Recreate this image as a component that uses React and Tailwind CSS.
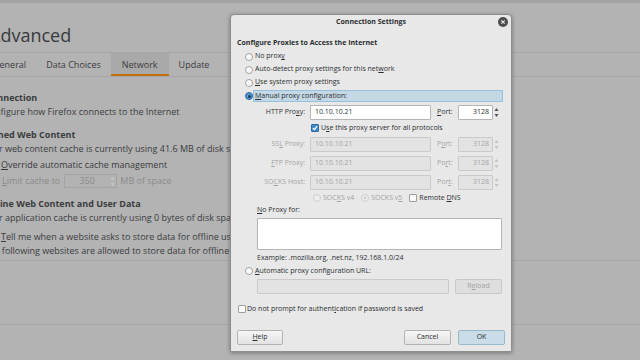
import React from 'react';

const U = ({ children }) => <span className="underline underline-offset-[1px]">{children}</span>;

function Radio({ checked, disabled }) {
  if (checked) {
    return (
      <span className="w-[8px] h-[8px] rounded-full bg-[#4f95cf] border border-[#2d6a9f] flex items-center justify-center shrink-0">
        <span className="w-[3px] h-[3px] rounded-full bg-[#1c3c5a]" />
      </span>
    );
  }
  return (
    <span className={`w-[8px] h-[8px] rounded-full border shrink-0 ${disabled ? 'border-[#cfcfcf] bg-[#ececec]' : 'border-[#a2a2a2] bg-[#fafafa]'}`} />
  );
}

function Check({ checked }) {
  if (checked) {
    return (
      <span className="w-[8px] h-[8px] rounded-[1px] bg-[#3f8ccb] border border-[#2d6a9f] flex items-center justify-center shrink-0">
        <svg width="6" height="6" viewBox="0 0 6 6"><path d="M0.8 3.1 L2.4 4.6 L5.2 1.2" stroke="#fff" strokeWidth="1.2" fill="none" /></svg>
      </span>
    );
  }
  return <span className="block w-[8px] h-[8px] rounded-[1px] border border-[#9e9e9e] bg-[#fafafa] shrink-0" />;
}

function Spin({ disabled }) {
  const c = disabled ? '#c4c4c4' : '#555';
  return (
    <svg width="7" height="15" viewBox="0 0 7 15" className="shrink-0">
      <path d="M3.5 3 L5.5 6 L1.5 6 Z" fill={c} />
      <path d="M3.5 12 L5.5 9 L1.5 9 Z" fill={c} />
    </svg>
  );
}

function ProxyRow({ label, port, disabled, mt }) {
  const txt = disabled ? 'text-[#a3a3a3]' : 'text-[#2e3436]';
  const box = disabled ? 'bg-[#e3e3e3] border-[#cacaca] text-[#a3a3a3]' : 'bg-white border-[#b5b5b5] text-[#2e3436]';
  return (
    <div className={`flex items-center h-[15px] ${mt}`}>
      <div className={`w-[68px] text-right ${txt}`}>{label}</div>
      <div className={`ml-[5px] w-[121px] h-[15px] border rounded-[1px] flex items-center px-[4px] ${box}`}>10.10.10.21</div>
      <div className={`ml-[6px] w-[21px] ${txt}`}>{port}</div>
      <div className={`w-[35px] h-[15px] border rounded-[1px] flex items-center justify-end px-[3px] ${box}`}>3128</div>
      <Spin disabled={disabled} />
    </div>
  );
}

function Btn({ children, w, blue, disabled }) {
  const cls = blue
    ? 'bg-[#c9dce8] border-[#98b8cc]'
    : disabled
      ? 'bg-[#dedede] border-[#c8c8c8] text-[#a3a3a3]'
      : 'bg-gradient-to-b from-[#f6f6f6] to-[#e2e2e2] border-[#b2b2b2]';
  return (
    <div className={`${w} h-[15px] border rounded-[2px] flex items-center justify-center ${cls}`}>{children}</div>
  );
}

function Dialog() {
  return (
    <div className="absolute left-[230px] top-[14px] w-[282px] bg-[#e8e8e8] border border-[#8d8d8d] rounded-t-[4px] shadow-[0_1px_4px_rgba(0,0,0,0.35)] text-[7px] text-[#2a2e30]">
      <div className="relative h-[15px] flex items-center justify-center font-bold">
        Connection Settings
        <span className="absolute right-[3px] top-[2px] w-[10px] h-[10px] rounded-full bg-[#4d4d4d] flex items-center justify-center">
          <svg width="6" height="6" viewBox="0 0 6 6"><path d="M1.3 1.3 L4.7 4.7 M4.7 1.3 L1.3 4.7" stroke="#e8e8e8" strokeWidth="1.2" /></svg>
        </span>
      </div>

      <div className="pl-[6px] pr-[6px] pb-[6px] flex flex-col">
        <div className="mt-[7px] h-[12px] flex items-center font-bold">Configure Proxies to Access the Internet</div>

        <div className="mt-[1px] h-[13px] flex items-center ml-[8px] gap-[2px]"><Radio /><span>No prox<U>y</U></span></div>
        <div className="h-[13px] flex items-center ml-[8px] gap-[2px]"><Radio /><span>Auto-detect proxy settings for this net<U>w</U>ork</span></div>
        <div className="h-[13px] flex items-center ml-[8px] gap-[2px]"><Radio /><span><U>U</U>se system proxy settings</span></div>
        <div className="mt-[1px] h-[12px] flex items-center ml-[8px]">
          <Radio checked />
          <div className="w-[250px] h-[12px] bg-[#c4d8e5] border border-[#95c1dd] flex items-center pl-[1px]"><span><U>M</U>anual proxy configuration:</span></div>
        </div>

        <ProxyRow label={<span>HTTP Pro<U>x</U>y:</span>} port={<span><U>P</U>ort:</span>} mt="mt-[3px]" />

        <div className="mt-[2px] h-[12px] flex items-center ml-[74px] gap-[2px]"><Check checked /><span>U<U>s</U>e this proxy server for all protocols</span></div>

        <ProxyRow disabled label={<span>SS<U>L</U> Proxy:</span>} port={<span>P<U>o</U>rt:</span>} mt="mt-[3px]" />
        <ProxyRow disabled label={<span><U>F</U>TP Proxy:</span>} port={<span>Po<U>r</U>t:</span>} mt="mt-[4px]" />
        <ProxyRow disabled label={<span>SO<U>C</U>KS Host:</span>} port={<span>Por<U>t</U>:</span>} mt="mt-[4px]" />

        <div className="mt-[2px] h-[12px] flex items-center ml-[76px] text-[#a3a3a3]">
          <Radio disabled /><span className="ml-[2px]">SOC<U>K</U>S v4</span>
          <span className="ml-[7px] w-[8px] h-[8px] rounded-full border border-[#cfcfcf] bg-[#ececec] flex items-center justify-center"><span className="w-[2px] h-[2px] rounded-full bg-[#b8b8b8]" /></span>
          <span className="ml-[2px]">SOCKS v<U>5</U></span>
          <div className="ml-[7px] flex"><Check /></div>
          <span className="ml-[2px] text-[#2a2e30]">Remote <U>D</U>NS</span>
        </div>

        <div className="h-[12px] flex items-center ml-[20px]"><span><U>N</U>o Proxy for:</span></div>
        <div className="mt-[2px] ml-[20px] w-[245px] h-[32px] bg-white border border-[#b5b5b5] rounded-[1px]" />
        <div className="mt-[2px] h-[12px] flex items-center ml-[20px]">Example: .mozilla.org, .net.nz, 192.168.1.0/24</div>

        <div className="mt-[1px] h-[12px] flex items-center ml-[8px] gap-[2px]"><Radio /><span><U>A</U>utomatic proxy configuration URL:</span></div>
        <div className="mt-[2px] h-[15px] flex items-center ml-[20px]">
          <div className="w-[192px] h-[15px] bg-[#e3e3e3] border border-[#cacaca] rounded-[1px]" />
          <div className="ml-[6px]"><Btn w="w-[47px]" disabled>R<U>e</U>load</Btn></div>
        </div>

        <div className="mt-[9px] h-[12px] flex items-center ml-[1px] gap-[1px]"><Check /><span>Do not prompt for authent<U>i</U>cation if password is saved</span></div>

        <div className="mt-[15px] flex items-center">
          <Btn w="w-[46px]"><span><U>H</U>elp</span></Btn>
          <div className="ml-auto flex gap-[7px]">
            <Btn w="w-[47px]">Cancel</Btn>
            <Btn w="w-[47px]" blue>OK</Btn>
          </div>
        </div>
      </div>
    </div>
  );
}

function Background() {
  return (
    <div className="text-[9px] text-[#3a3c3e]">
      <div className="h-[3px] bg-[#a2a2a2]" />
      <div className="h-[50px] border-b border-[#a6a6a6] flex items-center pt-[15px]">
        <div className="-ml-[11px] text-[18px] leading-none text-[#373a3d]">Advanced</div>
      </div>
      <div className="h-[24px] border-b border-[#a6a6a6] flex -ml-[17px]">
        <div className="px-[10px] flex items-center">General</div>
        <div className="px-[10px] flex items-center">Data Choices</div>
        <div className="px-[11px] flex items-center bg-[#a9a9a9] border-b-[2px] border-[#c4700f] pt-[2px]">Network</div>
        <div className="px-[10px] flex items-center">Update</div>
      </div>
      <div className="-ml-[14px] flex flex-col">
        <div className="mt-[14px] h-[14px] leading-[14px] font-bold">Connection</div>
        <div className="h-[14px] leading-[14px] -ml-[2px]">Configure how Firefox connects to the Internet</div>
        <div className="mt-[9px] h-[14px] leading-[14px] font-bold -ml-[4px]">Cached Web Content</div>
        <div className="h-[14px] leading-[14px] -ml-[3px]">Your web content cache is currently using 41.6 MB of disk space</div>
        <div className="mt-[2px] h-[14px] leading-[14px] flex items-center gap-[4px] ml-[2px]">
          <span className="w-[9px] h-[9px] border border-[#8e8e8e] bg-[#b8b8b8]" />
          <span><U>O</U>verride automatic cache management</span>
        </div>
        <div className="mt-[2px] h-[14px] flex items-center ml-[16px] text-[#8a8a8a]">
          <span><U>L</U>imit cache to</span>
          <div className="ml-[4px] w-[53px] h-[14px] border border-[#a3a3a3] flex items-center">
            <span className="flex-1 text-center">350</span>
            <Spin disabled />
          </div>
          <span className="ml-[3px]">MB of space</span>
        </div>
        <div className="mt-[9px] h-[14px] leading-[14px] font-bold -ml-[3px]">Offline Web Content and User Data</div>
        <div className="h-[14px] leading-[14px] -ml-[3px]">Your application cache is currently using 0 bytes of disk space</div>
        <div className="mt-[5px] h-[14px] leading-[14px] flex items-center gap-[4px] ml-[2px]">
          <span className="w-[9px] h-[9px] border border-[#8e8e8e] bg-[#b8b8b8]" />
          <span><U>T</U>ell me when a website asks to store data for offline use</span>
        </div>
        <div className="h-[14px] leading-[14px] -ml-[2px]">The following websites are allowed to store data for offline use:</div>
      </div>
      <div className="mt-[2px] h-[65px] border-t border-b border-[#a6a6a6]" />
    </div>
  );
}

export default function App() {
  return (
    <div className="relative w-[640px] h-[360px] overflow-hidden bg-[#b3b3b3] font-['Open_Sans',sans-serif]">
      <Background />
      <Dialog />
    </div>
  );
}
